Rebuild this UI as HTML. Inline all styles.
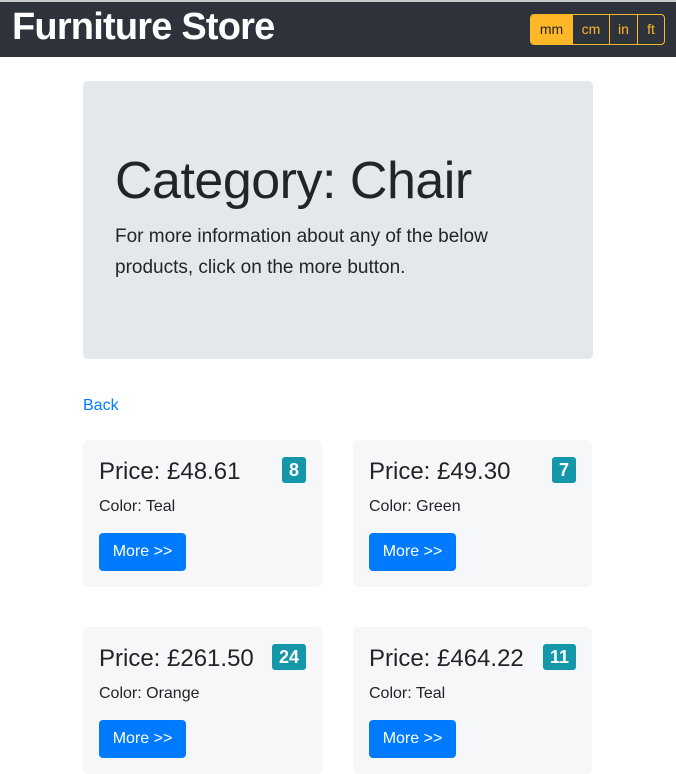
<!DOCTYPE html>
<html><head><style>
*{box-sizing:border-box;margin:0;padding:0}
body{width:676px;height:774px;overflow:hidden;background:#fff;font-family:"Liberation Sans",sans-serif;color:#212529;position:relative}
.hdr{position:absolute;left:0;top:0;width:676px;height:57px;background:#2d323b;border-top:2px solid #c8c8c8}
.hdr h1{position:absolute;left:12px;top:4px;font-size:38px;font-weight:700;color:#fff;letter-spacing:-0.8px}
.grp{position:absolute;left:530px;top:12px;height:31px;display:flex;border:1px solid #ffb727;border-radius:4px;overflow:hidden}
.grp div{color:#ffb727;font-size:14px;line-height:29px;text-align:center;border-left:1px solid #ffb727}
.grp div:first-child{border-left:none;background:#ffb727;color:#212529}
.jum{position:absolute;left:83px;top:81px;width:510px;height:278px;background:#e5e8eb;border-radius:5px}
.jum h2{position:absolute;left:32px;top:70px;font-size:52px;font-weight:300;letter-spacing:-0.5px}
.jum p{position:absolute;left:32px;top:140px;width:420px;font-size:19px;line-height:31px;font-weight:300}
.back{position:absolute;left:83px;top:397px;color:#007bff;font-size:16px}
.card{position:absolute;width:239px;height:147px;background:#f6f7f9;border-radius:5px}
.card .p{position:absolute;left:16px;top:18px;font-size:24px;font-weight:500}
.card .c{position:absolute;left:16px;top:58px;font-size:16px}
.card .b{position:absolute;right:16px;top:17px;height:26px;background:#1497a8;color:#fff;font-weight:700;font-size:18px;line-height:26px;padding:0 7px;border-radius:3px}
.card .m{position:absolute;left:16px;top:93px;width:87px;height:38px;background:#007bff;color:#fff;font-size:16px;line-height:38px;text-align:center;border-radius:4px}
</style></head><body>
<div class="hdr"><h1>Furniture Store</h1>
<div class="grp"><div style="width:41px">mm</div><div style="width:37px">cm</div><div style="width:28px">in</div><div style="width:27px">ft</div></div></div>
<div class="jum"><h2>Category: Chair</h2><p>For more information about any of the below products, click on the more button.</p></div>
<div class="back">Back</div>
<div class="card" style="left:83px;top:440px"><div class="p">Price: £48.61</div><div class="b">8</div><div class="c">Color: Teal</div><div class="m">More &gt;&gt;</div></div>
<div class="card" style="left:353px;top:440px"><div class="p">Price: £49.30</div><div class="b">7</div><div class="c">Color: Green</div><div class="m">More &gt;&gt;</div></div>
<div class="card" style="left:83px;top:627px"><div class="p">Price: £261.50</div><div class="b">24</div><div class="c">Color: Orange</div><div class="m">More &gt;&gt;</div></div>
<div class="card" style="left:353px;top:627px"><div class="p">Price: £464.22</div><div class="b">11</div><div class="c">Color: Teal</div><div class="m">More &gt;&gt;</div></div>
</body></html>
